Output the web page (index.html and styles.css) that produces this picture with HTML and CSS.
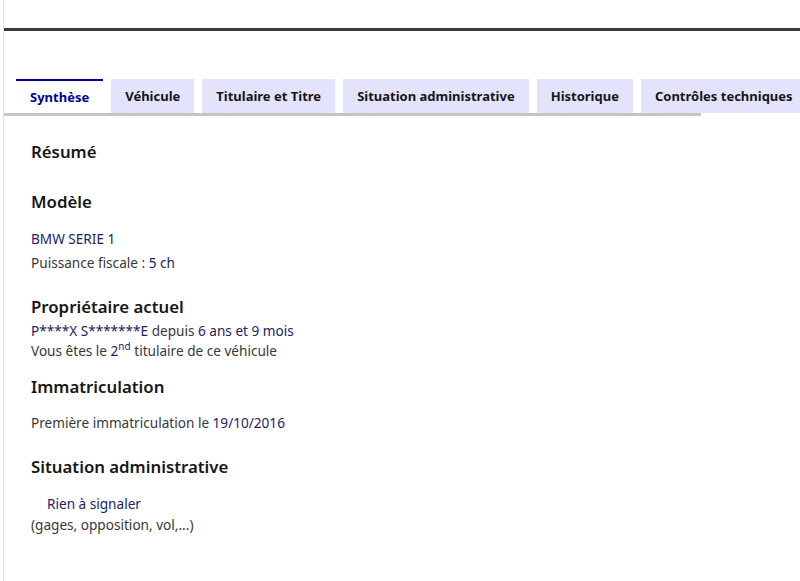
FILE: index.html
```html
<!DOCTYPE html>
<html lang="fr">
<head>
    <meta charset="UTF-8">
    <title>Synthèse du véhicule</title>
    <link rel="stylesheet" href="styles.css">
</head>
<body>
    <div class="page">
        <div class="header-bar"></div>

        <div class="tabs">
            <ul class="tabs-list">
                <li class="tab tab-active">Synthèse</li>
                <li class="tab">Véhicule</li>
                <li class="tab">Titulaire et Titre</li>
                <li class="tab">Situation administrative</li>
                <li class="tab">Historique</li>
                <li class="tab">Contrôles techniques</li>
            </ul>
        </div>

        <div class="panel">
            <h2 class="title">Résumé</h2>

            <h3 class="section-title title-model">Modèle</h3>
            <p class="line value">BMW SERIE 1</p>
            <p class="line">Puissance fiscale : <span class="value">5 ch</span></p>

            <h3 class="section-title title-owner">Propriétaire actuel</h3>
            <p class="line line-tight"><span class="value">P****X S*******E</span> depuis <span class="value">6 ans et 9 mois</span></p>
            <p class="line line-tight">Vous êtes le <span class="value">2<sup>nd</sup></span> titulaire de ce véhicule</p>

            <h3 class="section-title title-reg">Immatriculation</h3>
            <p class="line">Première immatriculation le <span class="value">19/10/2016</span></p>

            <h3 class="section-title title-admin">Situation administrative</h3>
            <p class="line status value">Rien à signaler</p>
            <p class="line line-tight">(gages, opposition, vol,...)</p>
        </div>
    </div>
</body>
</html>
```

FILE: styles.css
```css
body {
    margin: 0;
    background: #ffffff;
    font-family: 'Noto Sans', 'Liberation Sans', sans-serif;
    color: #383838;
}
.page {
    margin-left: 3px;
    min-height: 581px;
    border-left: 1px solid #e4e4e4;
    padding-top: 28px;
    overflow: hidden;
}
.header-bar {
    height: 3px;
    background: #3a3a3a;
}

/* onglets */
.tabs {
    width: 697px;
    margin-top: 48px;
    border-bottom: 3px solid #c4c4c4;
}
.tabs-list {
    display: flex;
    gap: 8px;
    margin: 0;
    padding: 0 0 0 12px;
    list-style: none;
    white-space: nowrap;
}
.tab {
    flex: none;
    height: 34px;
    line-height: 34px;
    padding: 0 14px;
    background: #e3e3fd;
    color: #161616;
    font-size: 13px;
    font-weight: 700;
}
.tab-active {
    background: #ffffff;
    color: #000091;
    border-top: 2px solid #000091;
    height: 32px;
    line-height: 32px;
}

/* contenu */
.panel {
    padding: 24px 0 0 27px;
}
.title, .section-title {
    margin: 0;
    font-size: 16.8px;
    font-weight: 600;
    line-height: 24px;
    color: #161616;
}
.title-model { margin-top: 26px; margin-bottom: 13px; }
.title-owner { margin-top: 20px; margin-bottom: 2px; }
.title-reg { margin-top: 14px; margin-bottom: 12px; }
.title-admin { margin-top: 20px; margin-bottom: 14px; }
.line {
    margin: 0;
    font-size: 13.6px;
    line-height: 24px;
}
.line-tight {
    line-height: 20px;
}
.value {
    color: #232360;
}
.status {
    padding-left: 16px;
    line-height: 22px;
}
sup {
    font-size: 10px;
    line-height: 0;
}
```
